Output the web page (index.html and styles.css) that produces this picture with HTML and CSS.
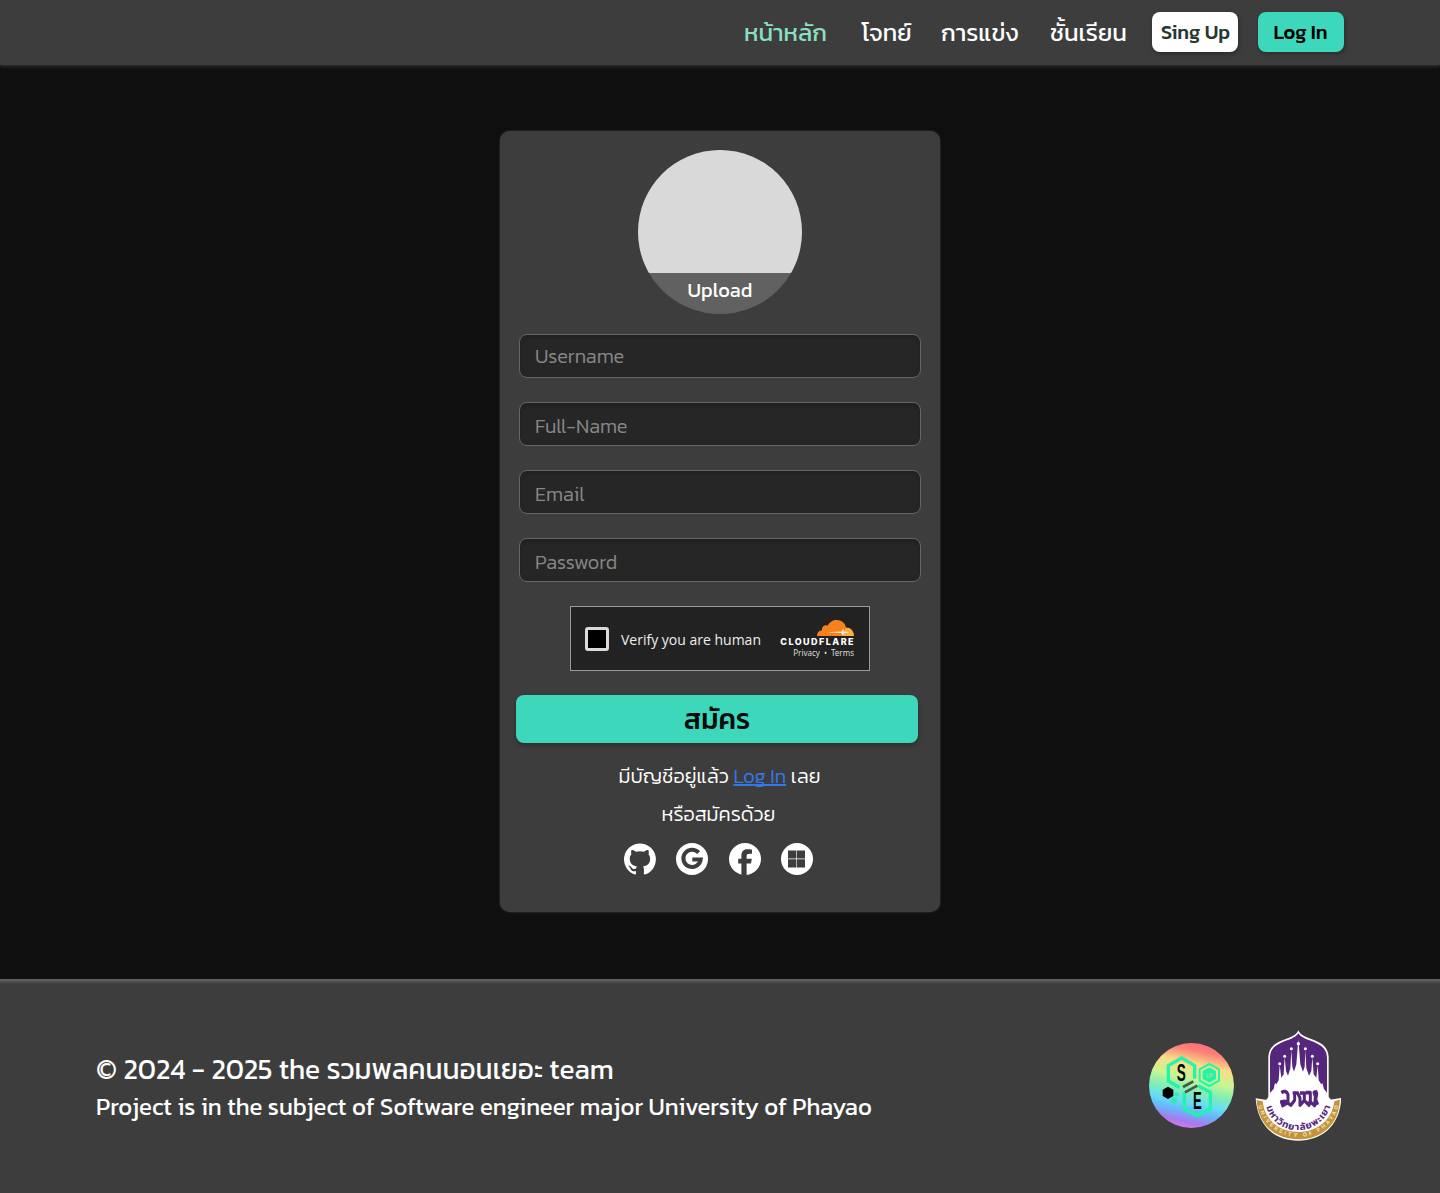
FILE: index.html
```html
<!DOCTYPE html>
<html lang="th">
<head>
<meta charset="utf-8">
<title>สมัคร</title>
<link rel="stylesheet" href="styles.css">
</head>
<body>
<header class="topbar">
  <nav class="nav">
    <a class="nav-link nav-home active">หน้าหลัก</a>
    <a class="nav-link nav-problems">โจทย์</a>
    <a class="nav-link nav-contest">การแข่ง</a>
    <a class="nav-link nav-class">ชั้นเรียน</a>
  </nav>
  <div class="actions">
    <button class="btn btn-light">Sing Up</button>
    <button class="btn btn-accent">Log In</button>
  </div>
</header>

<main class="main">
  <form class="card">
    <div class="avatar"><span class="avatar-label">Upload</span></div>
    <div class="fields">
      <div class="field field-user">Username</div>
      <div class="field">Full-Name</div>
      <div class="field">Email</div>
      <div class="field">Password</div>
    </div>
    <div class="captcha">
      <span class="captcha-box"></span>
      <span class="captcha-text">Verify you are human</span>
      <div class="captcha-brand">
        <svg class="cloud" viewBox="0 0 37 16" width="37" height="16">
          <path fill="#fbad41" d="M25 16 28 7.500C33 7 37 10.500 37 16Z"/>
          <path fill="#f6821f" d="M0 16C0 12.500 2 10.500 5 10.300C4.600 7 7.500 4.300 10.600 5.800C12.500 1.800 16 0 19.600 0C24.500 0 28.300 3 29 7.500L26 16Z"/>
          <path fill="#fff" opacity=".8" d="M10 12.200 24.500 11.500 26.300 8.500 27.300 11.600 33 12.200 27.500 12.900 25.500 15.800 24.500 13Z"/>
        </svg>
        <span class="brand-name">CLOUDFLARE</span>
        <span class="brand-links"><span>Privacy</span><span>•</span><span>Terms</span></span>
      </div>
    </div>
    <button class="submit" type="button">สมัคร</button>
    <p class="login-line"><span class="login-ask">มีบัญชีอยู่แล้ว</span><a class="login-link">Log In</a><span class="login-end">เลย</span></p>
    <p class="or-line">หรือสมัครด้วย</p>
    <div class="socials">
      <svg viewBox="0 0 32 32" width="32" height="32">
        <path fill="#fff" transform="scale(1.3333)" d="M12 .3a12 12 0 0 0-3.800 23.380c.6.120.830-.260.830-.570L9 21.070c-3.340.720-4.040-1.610-4.040-1.610-.550-1.390-1.340-1.760-1.340-1.760-1.080-.740.090-.730.090-.730 1.200.090 1.830 1.240 1.830 1.240 1.080 1.830 2.810 1.300 3.500 1 .100-.780.420-1.310.760-1.610-2.670-.300-5.470-1.330-5.470-5.930 0-1.310.470-2.380 1.240-3.220-.140-.300-.540-1.520.100-3.180 0 0 1-.320 3.300 1.230a11.500 11.500 0 0 1 6 0c2.280-1.550 3.290-1.230 3.290-1.230.640 1.660.240 2.880.120 3.180a4.650 4.650 0 0 1 1.230 3.220c0 4.610-2.800 5.630-5.480 5.920.420.360.810 1.100.810 2.220l-.010 3.290c0 .310.200.690.820.570A12 12 0 0 0 12 .3"/>
      </svg>
      <svg viewBox="0 0 32 32" width="32" height="32">
        <circle cx="16" cy="16" r="16" fill="#fff"/>
        <path fill="none" stroke="#3d3d3d" stroke-width="4" d="M22.600 9.600A8.700 8.700 0 1 0 24.700 16.500H16.300"/>
      </svg>
      <svg viewBox="0 0 32 32" width="32" height="32">
        <circle cx="16" cy="16" r="16" fill="#fff"/>
        <path fill="#3d3d3d" d="M12.400 32V20.500H9.200V15.800H12.400V12.600C12.400 8 15.200 6.200 18.500 6.200C20.400 6.200 23 6.500 23 6.500V10.800H20.500C18.300 10.800 17.600 11.500 17.600 13V15.800H22.800L22 20.500H17.600V32Z"/>
      </svg>
      <svg viewBox="0 0 32 32" width="32" height="32">
        <circle cx="16" cy="16" r="16" fill="#fff"/>
        <path fill="#3d3d3d" d="M7 7.500H15.300V15.500H7ZM15.900 7.500H24V15.500H15.900ZM7 16.200H15.300V24.500H7ZM15.900 16.200H24V24.500H15.900Z"/>
      </svg>
    </div>
  </form>
</main>

<footer class="footer">
  <div class="credits">
    <p class="credit-team">© 2024 - 2025 the รวมพลคนนอนเยอะ team</p>
    <p class="credit-project">Project is in the subject of Software engineer major University of Phayao</p>
  </div>
  <div class="logos">
    <svg class="logo-se" viewBox="27 39 255 255" width="85" height="85">
      <defs>
        <linearGradient id="rainbow" x1=".62" y1="0" x2=".4" y2="1">
          <stop offset="0" stop-color="#ff6b7d"/><stop offset=".1" stop-color="#fb8177"/>
          <stop offset=".25" stop-color="#fbdb88"/><stop offset=".42" stop-color="#c9f593"/>
          <stop offset=".56" stop-color="#82efb1"/><stop offset=".7" stop-color="#66dcf5"/>
          <stop offset=".8" stop-color="#66b8fb"/><stop offset=".92" stop-color="#a879ee"/>
          <stop offset="1" stop-color="#dc78e9"/>
        </linearGradient>
      </defs>
      <circle cx="154.500" cy="166.500" r="127.500" fill="url(#rainbow)"/>
      <g fill="none" stroke="#24f3ac">
        <path stroke-width="10" d="M164 146V107L125 84 85 107V153L119 173"/>
        <path stroke-width="10" d="M133 187V236L172 257 211 236V187L174 167"/>
        <path stroke-width="6" d="M208 102 237 118V152L208 168 179 152V118Z"/>
      </g>
      <path fill="#24f3ac" d="M208 112 228 123V147L208 158 188 147V123Z"/>
      <path fill="#2bedb0" d="M102 201 111 206V216L102 221 93 216V206ZM110 187 116 190V197L110 200 104 197V190Z"/>
      <path fill="#000" d="M84 170 100 179V198L84 207 68 198V179Z"/>
      <path stroke="#46544f" stroke-width="8" d="M129 171 160 154M135 187 172 167"/>
      <text class="se-letter" transform="translate(110 153) scale(.58 1)">S</text>
      <text class="se-letter" transform="translate(159 237) scale(.56 1)">E</text>
      <text class="se-up" transform="translate(197 144) scale(.68 1)">UP</text>
    </svg>
    <svg class="logo-up" viewBox="26 25 258 333" width="86" height="111">
      <defs>
        <path id="arcThai" d="M60 256C86 350 228 350 254 248"/>
        <path id="arcName" d="M36 252C68 378 248 378 279 246"/>
      </defs>
      <path fill="#fff" d="M156 26C167 58 245 48 247 106V230H66V106C68 48 146 58 156 26Z"/>
      <path fill="#56267c" d="M156 35C171 62 242 56 242 108V225H71V108C71 56 141 62 156 35Z"/>
      <path fill="#fff" d="M156 52 159 90 162 128 170 150 175 135 177 85 180 140 188 162 195 148 198 106 202 158 210 168 214 130 217 176 225 188 228 184 233 202 243 215V320H70V215L82 202 86 184 90 188 97 176 100 130 105 168 112 158 115 106 119 148 125 162 132 140 135 85 138 135 143 150 150 128 153 90Z"/>
      <g fill="#fff"><circle cx="156" cy="66" r="5"/><circle cx="135" cy="81" r="4.500"/><circle cx="177" cy="81" r="4.500"/><circle cx="115" cy="104" r="4.500"/><circle cx="198" cy="104" r="4.500"/><circle cx="100" cy="126" r="4.500"/><circle cx="214" cy="126" r="4.500"/></g>
      <path fill="#fff" d="M28 230 66 236C90 296 220 300 246 235L285 229C281 310 230 357 156 357C82 357 33 310 28 230Z"/>
      <path fill="#c4933c" d="M31 235 49 239C62 362 250 362 264 238L281 234C277 310 225 353 156 353C87 353 35 310 31 235Z"/>
      <path fill="#fff" d="M57 237C72 345 240 348 255 235L234 212H78Z"/>
      <path transform="translate(0 -42) scale(1 1.18)" fill="none" stroke="#56267c" stroke-width="9" stroke-linejoin="round" d="M105 216Q119 208 125 221V241L109 249 105 239 116 238 134 248 145 235V216M139 217H154L161 230V248L174 236V217H161M174 236 188 248 192 235V216H178M192 240 205 249 207 225 203 216Q216 208 208 233L214 247"/>
      <text class="crest-thai"><textPath href="#arcThai" textLength="256">มหาวิทยาลัยพะเยา</textPath></text>
      <text class="crest-name"><textPath href="#arcName" textLength="328">UNIVERSITY OF PHAYAO</textPath></text>
    </svg>
  </div>
</footer>
</body>
</html>
```
FILE: styles.css
```css
* { box-sizing: border-box; }
body {
  margin: 0;
  width: 1440px;
  height: 1193px;
  display: flex;
  flex-direction: column;
  background: #0f0f0f;
  color: #fff;
  font-family: Kanit, Inter, "Noto Sans Thai", "Noto Sans", sans-serif;
}
p { margin: 0; white-space: nowrap; }
button { border: 0; padding: 0; font-family: inherit; }

.topbar {
  height: 65px;
  flex: none;
  display: flex;
  justify-content: flex-end;
  padding: 12px 96px 0 0;
  background: #3d3d3d;
  box-shadow: 0 1px 4px rgba(100, 100, 100, .5);
}
.nav { display: flex; height: 42px; align-items: center; }
.nav-link { font-size: 24px; line-height: 40px; white-space: nowrap; }
.nav-home { width: 117.5px; }
.nav-problems { width: 79.5px; }
.nav-contest { width: 109px; }
.nav-class { width: 102px; }
.active { color: #8adfc0; }
.actions { display: flex; gap: 20px; }
.btn {
  width: 86px;
  height: 40px;
  border-radius: 8px;
  font-size: 20px;
  font-weight: 500;
  white-space: nowrap;
  box-shadow: 1px 2px 4px rgba(0, 0, 0, .3);
}
.btn-light { background: #fff; color: #263832; padding-left: 1px; }
.btn-accent { background: #3dd8bc; color: #000; padding-right: 1px; }

.main { height: 914px; flex: none; padding-top: 66px; display: flex; justify-content: center; align-items: flex-start; }
.card {
  width: 440px;
  height: 781px;
  border-radius: 10px;
  background: #3d3d3d;
  box-shadow: 0 0 2px rgba(120, 120, 120, .6);
  display: flex;
  flex-direction: column;
  align-items: center;
  padding-top: 19px;
}
.avatar {
  width: 164px;
  height: 164px;
  flex: none;
  border-radius: 50%;
  overflow: hidden;
  background: linear-gradient(#d9d9d9 123px, #616161 123px);
  display: flex;
  align-items: flex-end;
  justify-content: center;
}
.avatar-label { height: 41px; font-size: 20px; font-weight: 400; line-height: 34px; }
.fields { display: flex; flex-direction: column; gap: 24px; margin-top: 20px; }
.field {
  width: 402px;
  height: 44px;
  border: 1px solid #666;
  border-radius: 8px;
  background: #262626;
  box-shadow: inset 0 2px 4px rgba(0, 0, 0, .2);
  padding: 2px 15px 0;
  font-size: 20px;
  font-weight: 300;
  line-height: 42px;
  color: #868686;
}
.field-user { padding-top: 0; }

.captcha {
  width: 300px;
  height: 65px;
  margin-top: 24px;
  border: 1px solid #999;
  background: #222;
  display: flex;
  align-items: center;
  padding-left: 14px;
  font-family: "Open Sans", "Noto Sans", sans-serif;
}
.captcha-box { width: 24px; height: 24px; border: 3px solid #dadada; border-radius: 3px; background: #000; }
.captcha-text { width: 158px; margin-left: 12px; padding-top: 1px; font-size: 14px; color: #eee; white-space: nowrap; }
.captcha-brand { width: 75px; padding-top: 2px; display: flex; flex-direction: column; align-items: flex-end; }
.brand-name { font: 800 9px/10px Inter, sans-serif; letter-spacing: 1.45px; margin-right: -1px; margin-top: 1px; }
.brand-links { display: flex; gap: 4px; font: 8px/12px "Noto Sans", sans-serif; color: #ddd; }

.submit {
  width: 402px;
  height: 48px;
  margin: 24px 6px 0 0;
  border-radius: 8px;
  background: #3dd8bc;
  color: #0b0b0b;
  font-size: 28px;
  font-weight: 500;
  box-shadow: 0 2px 4px rgba(0, 0, 0, .3);
}
.login-line { width: 202px; height: 30px; margin: 18px 1px 0 0; display: flex; justify-content: space-between; font-size: 20px; font-weight: 300; line-height: 30px; }
.login-link { color: #3478e8; text-decoration: underline; text-decoration-skip-ink: none; }
.or-line { height: 30px; margin: 8px 3px 0 0; font-size: 20px; font-weight: 300; line-height: 30px; }
.socials { display: flex; gap: 20.3px; margin: 14.4px 3px 0 0; }
.socials svg, .logos svg, .cloud { display: block; }

.footer {
  height: 214px;
  flex: none;
  background: #3d3d3d linear-gradient(#666, #3d3d3d) 0 0 / 100% 5px no-repeat;
  display: flex;
  justify-content: space-between;
  align-items: flex-start;
  padding: 51px 99px 0 96px;
}
.credits { padding-top: 19px; }
.credit-team { font-size: 28px; line-height: 40px; white-space: pre; }
.credit-project { font-size: 24px; line-height: 36px; }
.logos { display: flex; gap: 21px; align-items: flex-start; }
.logo-se { margin-top: 13px; }
.se-letter { font: 700 70px "Liberation Sans", sans-serif; fill: #000; }
.se-up { font: 700 24px "Liberation Sans", sans-serif; fill: #83ed8c; }
.crest-thai { font-size: 29px; font-weight: 600; fill: #56267c; }
.crest-name { font: 700 16px Inter, sans-serif; fill: #eee0b0; }
```
